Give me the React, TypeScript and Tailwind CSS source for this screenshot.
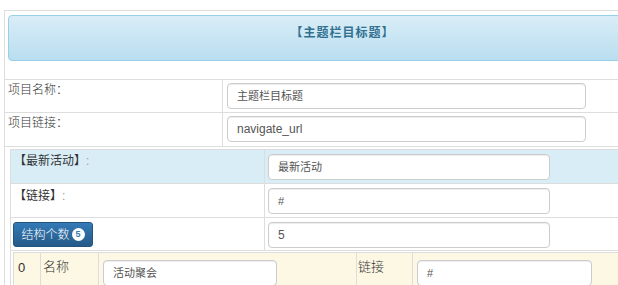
const font = { fontFamily: '"Liberation Sans", "Noto Sans CJK SC", sans-serif' }

function Field({ value, className = '' }: { value: string; className?: string }) {
  return (
    <div
      className={`h-[26px] rounded-[4px] border border-[#ccc] bg-white pl-[9px] flex items-center text-[11px] font-normal text-[#555] shadow-[inset_0_1px_1px_rgba(0,0,0,0.075)] ${className}`}
    >
      {value}
    </div>
  )
}

export default function App() {
  return (
    <div className="w-[618px] h-[285px] overflow-hidden bg-white text-[#333]" style={font}>
      <div className="pt-[10px] pl-[4px]">
        <div className="w-[720px] border-l border-t border-[#ddd]">
          {/* banner */}
          <div className="pt-[4px] pl-[3px] h-[68px]">
            <div className="h-[46px] w-[669px] rounded-[4px] border border-[#9acfea] bg-gradient-to-b from-[#d9edf7] to-[#b9def0] pt-[10px] text-center text-[12px] leading-[14px] font-semibold tracking-[1px] text-[#31708f]">
              【主题栏目标题】
            </div>
          </div>

          {/* top rows */}
          <div className="flex h-[33px] border-t border-[#ddd]">
            <div className="w-[218px] border-r border-[#ddd] pl-[3px] pt-[1px] text-[12px] font-light">项目名称：</div>
            <div className="pl-[4px] pt-[3px]">
              <Field value="主题栏目标题" className="w-[359px]" />
            </div>
          </div>
          <div className="flex h-[34px] border-t border-[#ddd]">
            <div className="w-[218px] border-r border-[#ddd] pl-[3px] pt-[1px] text-[12px] font-light">项目链接：</div>
            <div className="pl-[4px] pt-[3px]">
              <Field value="navigate_url" className="w-[359px] text-[12px]" />
            </div>
          </div>

          {/* nested table */}
          <div className="border-t border-[#ddd] pl-[5px] pt-[2px]">
            <div className="border-l border-t border-[#ddd]">
              <div className="flex h-[34px] border-b border-[#ddd] bg-[#d9edf7]">
                <div className="w-[254px] border-r border-[#ddd] pl-[3px] pt-[2px] text-[12px]">
                  【最新活动】<span className="text-[#999]">:</span>
                </div>
                <div className="pl-[3px] pt-[4px]">
                  <Field value="最新活动" className="w-[282px] h-[25px]" />
                </div>
              </div>
              <div className="flex h-[34px] border-b border-[#ddd]">
                <div className="w-[254px] border-r border-[#ddd] pl-[3px] pt-[3px] text-[12px]">
                  【链接】<span className="text-[#999]">:</span>
                </div>
                <div className="pl-[3px] pt-[4px]">
                  <Field value="#" className="w-[282px] h-[25px] text-[9px]" />
                </div>
              </div>
              <div className="flex h-[33px] border-b border-[#ddd]">
                <div className="w-[254px] border-r border-[#ddd] pl-[2px] pt-[4px]">
                  <div className="flex h-[25px] w-[80px] items-center justify-center gap-[2px] rounded-[3px] border border-[#245580] bg-gradient-to-b from-[#337ab7] to-[#265a88] text-[12px] font-light text-white">
                    结构个数
                    <span className="flex h-[13px] min-w-[13px] items-center justify-center rounded-full bg-white px-[3px] text-[9px] font-bold text-[#337ab7]">
                      5
                    </span>
                  </div>
                </div>
                <div className="pl-[3px] pt-[4px]">
                  <Field value="5" className="w-[282px] h-[25px] text-[12px]" />
                </div>
              </div>

              {/* item row */}
              <div className="pl-[2px] pt-[1px]">
                <div className="flex h-[40px] border-l border-t border-[#ddd] bg-[#fcf8e3] text-[13px] font-light">
                  <div className="w-[27px] border-r border-[#ddd] pl-[4px] pt-[5px]">0</div>
                  <div className="w-[58px] border-r border-[#ddd] pl-[2px] pt-[4px]">名称</div>
                  <div className="w-[258px] border-r border-[#ddd] pl-[4px] pt-[7px]">
                    <Field value="活动聚会" className="w-[174px]" />
                  </div>
                  <div className="w-[56px] border-r border-[#ddd] pl-[1px] pt-[4px]">链接</div>
                  <div className="pl-[4px] pt-[7px]">
                    <Field value="#" className="w-[175px] text-[9px]" />
                  </div>
                </div>
              </div>
            </div>
          </div>
        </div>
      </div>
    </div>
  )
}
